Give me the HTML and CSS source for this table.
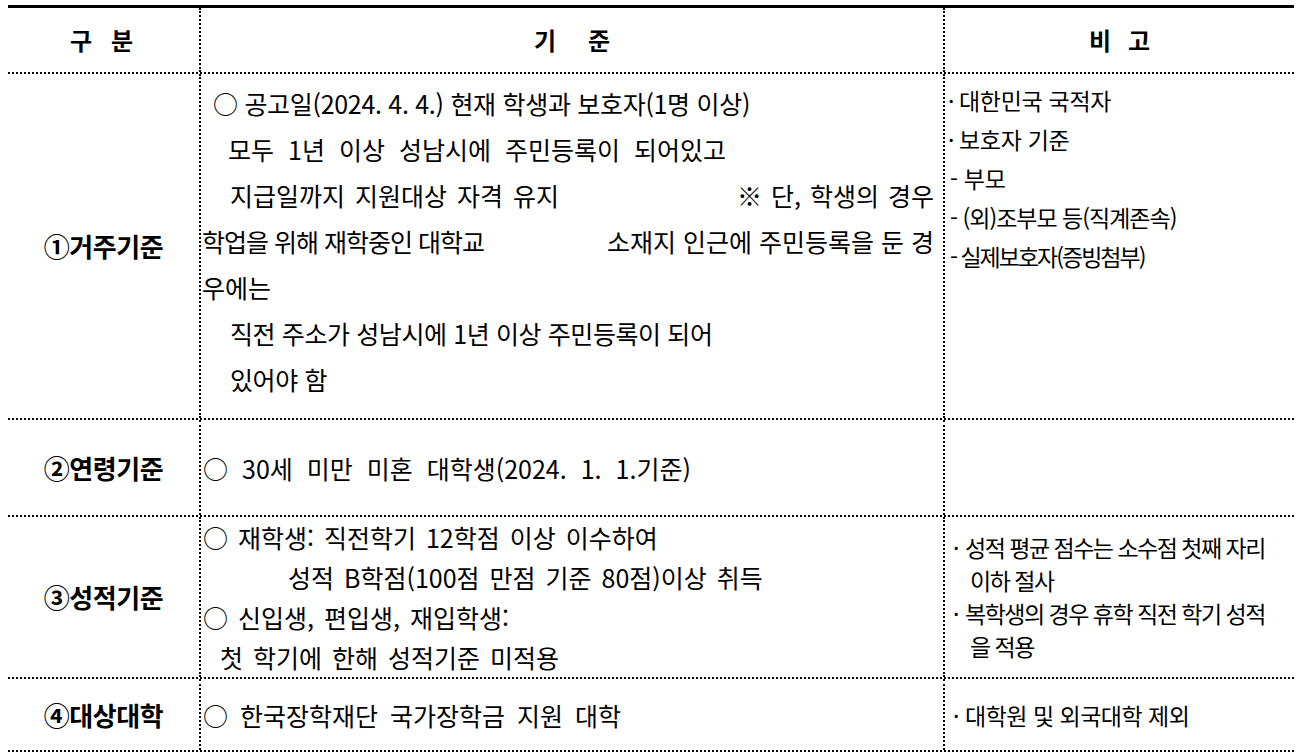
FILE: index.html
```html
<!DOCTYPE html>
<html lang="ko">
<head>
<meta charset="utf-8">
<title>지원 자격 기준</title>
<link rel="stylesheet" href="styles.css">
</head>
<body>
<div class="sheet">
  <div class="row head">
    <div class="cell c1 hd g-narrow"><span>구</span><span>분</span></div>
    <div class="cell c2 hd g-wide"><span>기</span><span>준</span></div>
    <div class="cell c3 hd g-narrow2"><span>비</span><span>고</span></div>
  </div>

  <div class="row r1">
    <div class="cell c1 label">①거주기준</div>
    <div class="cell c2 body lh46 top">
      <p class="ln in12 ls-03">○ 공고일(2024. 4. 4.) 현재 학생과 보호자(1명 이상)</p>
      <p class="ln in27 ws7">모두 1년 이상 성남시에 주민등록이 되어있고</p>
      <p class="ln in29 split"><span class="ws3">지급일까지 지원대상 자격 유지</span><span class="ws2">※ 단, 학생의 경우</span></p>
      <p class="ln in1 split"><span class="squeeze">학업을 위해 재학중인 대학교</span><span>소재지 인근에 주민등록을 둔 경</span></p>
      <p class="ln in1">우에는</p>
      <p class="ln in29 cond">직전 주소가 성남시에 1년 이상 주민등록이 되어</p>
      <p class="ln in29 cond">있어야 함</p>
    </div>
    <div class="cell c3 note n1 lh39 top">
      <p class="ln"><span class="dot">·</span>대한민국 국적자</p>
      <p class="ln"><span class="dot">·</span>보호자 기준</p>
      <p class="ln in2">- 부모</p>
      <p class="ln in2 cond1">- (외)조부모 등(직계존속)</p>
      <p class="ln in2 cond2">- 실제보호자(증빙첨부)</p>
    </div>
  </div>

  <div class="row r2">
    <div class="cell c1 label">②연령기준</div>
    <div class="cell c2 body lh40">
      <p class="ln in2 ws7">○ 30세 미만 미혼 대학생(2024. 1. 1.기준)</p>
    </div>
    <div class="cell c3 note"></div>
  </div>

  <div class="row r3">
    <div class="cell c1 label">③성적기준</div>
    <div class="cell c2 body lh40">
      <p class="ln in2 ws3">○ 재학생: 직전학기 12학점 이상 이수하여</p>
      <p class="ln in87 ws3">성적 B학점(100점 만점 기준 80점)이상 취득</p>
      <p class="ln in2 ws3">○ 신입생, 편입생, 재입학생:</p>
      <p class="ln in19 ws3">첫 학기에 한해 성적기준 미적용</p>
    </div>
    <div class="cell c3 note n3 lh33">
      <p class="ln in5"><span class="dot dot-s">·</span>성적 평균 점수는 소수점 첫째 자리</p>
      <p class="ln in22">이하 절사</p>
      <p class="ln in5"><span class="dot dot-s">·</span>복학생의 경우 휴학 직전 학기 성적</p>
      <p class="ln in22">을 적용</p>
    </div>
  </div>

  <div class="row r4">
    <div class="cell c1 label">④대상대학</div>
    <div class="cell c2 body lh40">
      <p class="ln in2 ws5">○ 한국장학재단 국가장학금 지원 대학</p>
    </div>
    <div class="cell c3 note n4">
      <p class="ln in5"><span class="dot dot-s">·</span>대학원 및 외국대학 제외</p>
    </div>
  </div>
</div>
</body>
</html>
```

FILE: styles.css
```css
html, body {
  margin: 0;
  padding: 0;
  background: #ffffff;
}

body {
  color: #000000;
  font-family: "Noto Sans CJK KR", "Noto Sans", sans-serif;
}

.sheet {
  margin: 5px 0 0 8px;
  width: 1286px;
  border-top: 3px solid #000000;
}

.row {
  display: grid;
  grid-template-columns: 193px 744px 349px;
  border-bottom: 2px dotted #000000;
  box-sizing: border-box;
}

.head { height: 66px; }
.r1 { height: 346px; }
.r2 { height: 97px; }
.r3 { height: 162px; }
.r4 { height: 73px; }

.cell {
  display: flex;
  flex-direction: column;
  justify-content: center;
  border-right: 2px dotted #000000;
  min-width: 0;
  overflow: hidden;
}

.cell.c3 {
  border-right: none;
}

/* header */
.hd {
  flex-direction: row;
  align-items: center;
  justify-content: center;
  font-size: 24px;
  font-weight: 700;
  line-height: 30px;
}

.g-narrow { gap: 19px; padding-right: 4px; }
.g-wide { gap: 32px; }
.g-narrow2 { gap: 17px; }

/* first column labels */
.label {
  align-items: center;
  font-size: 26px;
  font-weight: 700;
  line-height: 32px;
  letter-spacing: -0.4px;
}

/* body text */
.body {
  font-size: 25px;
}

.note {
  font-size: 23px;
  padding-left: 3px;
}

.n1 { letter-spacing: -0.3px; }
.n3 { letter-spacing: -1.5px; }
.n4 { letter-spacing: -0.5px; }

.top {
  justify-content: flex-start;
}

.body.top { padding-top: 6px; }
.note.top { padding-top: 7px; }

.lh46 { line-height: 46px; }
.lh40 { line-height: 40px; }
.lh39 { line-height: 39px; }
.lh33 { line-height: 33px; }

.ln {
  margin: 0;
  white-space: nowrap;
}

.split {
  display: flex;
  justify-content: space-between;
  padding-right: 9px;
}

.in1 { padding-left: 1px; }
.in2 { padding-left: 2px; }
.in5 { padding-left: 5px; }
.in12 { padding-left: 12px; }
.in19 { padding-left: 19px; }
.in22 { padding-left: 22px; }
.in27 { padding-left: 27px; }
.in29 { padding-left: 29px; }
.in87 { padding-left: 87px; }

.ws2 { word-spacing: 2px; }
.ws3 { word-spacing: 3px; }
.ws5 { word-spacing: 5px; }
.ws7 { word-spacing: 7px; }

.ls-03 { letter-spacing: -0.3px; }
.squeeze { letter-spacing: -1px; }
.cond { letter-spacing: -0.4px; }
.cond1 { letter-spacing: -1px; }
.cond2 { letter-spacing: -2px; }

.dot {
  display: inline-block;
  width: 11px;
  letter-spacing: 0;
}

.dot-s {
  width: 12px;
}
```
